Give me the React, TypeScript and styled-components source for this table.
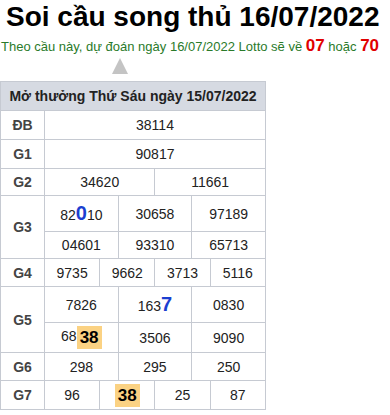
import React from 'react';
import styled, { createGlobalStyle } from 'styled-components';

const GlobalStyle = createGlobalStyle`
  body {
    margin: 0;
    background: #fff;
    font-family: "Liberation Sans", Arial, sans-serif;
  }
`;

const Page = styled.div`
  width: 390px;
  display: flex;
  flex-direction: column;
`;

const Title = styled.h1`
  margin: 0;
  padding: 1px 0 0 6px;
  font-size: 28px;
  line-height: 32px;
  font-weight: 700;
  color: #000;
  white-space: nowrap;
`;

const Lead = styled.p`
  margin: 0;
  padding: 4px 0 0 1px;
  font-size: 13px;
  line-height: 18px;
  color: #2a7a2a;
  white-space: nowrap;
`;

const Lotto = styled.b`
  color: #e10000;
  font-size: 17px;
`;

const Arrow = styled.div`
  margin: 2px 0 7px 112px;
  width: 0;
  height: 0;
  border-left: 8px solid transparent;
  border-right: 8px solid transparent;
  border-bottom: 16px solid #c4c4c4;
`;

const Table = styled.table`
  width: 266px;
  border-collapse: collapse;
  table-layout: fixed;
  font-size: 14px;
  color: #222;
`;

const HeadCell = styled.th`
  background: #d6dae2;
  border: 1px solid #c6cad2;
  height: 28px;
  padding: 0;
  font-size: 14px;
  font-weight: 700;
  color: #222;
  text-align: center;
`;

const Label = styled.td`
  border: 1px solid #c6cad2;
  padding: 0;
  font-weight: 700;
  font-size: 14px;
  color: #444;
  text-align: center;
`;

const Cell = styled.td<{ $h?: number }>`
  border: 1px solid #c6cad2;
  height: ${p => p.$h ?? 27}px;
  padding: 0;
  text-align: center;
  vertical-align: middle;
`;

const Big = styled.span`
  color: #1b3fd0;
  font-weight: 700;
  font-size: 20px;
`;

const Mark = styled.span`
  display: inline-block;
  background: #fbd283;
  color: #000;
  font-weight: 700;
  font-size: 17px;
  line-height: 23px;
  padding: 0 3px;
  vertical-align: middle;
`;

const App: React.FC = () => {
  return (
    <Page>
      <GlobalStyle />
      <Title>Soi cầu song thủ 16/07/2022</Title>
      <Lead>
        Theo cầu này, dự đoán ngày 16/07/2022 Lotto sẽ về <Lotto>07</Lotto> hoặc{' '}
        <Lotto>70</Lotto>
      </Lead>
      <Arrow />
      <Table>
        <colgroup>
          <col style={{ width: 44 }} />
          {Array.from({ length: 12 }).map((_, i) => (
            <col key={i} />
          ))}
        </colgroup>
        <thead>
          <tr>
            <HeadCell colSpan={13}>Mở thưởng Thứ Sáu ngày 15/07/2022</HeadCell>
          </tr>
        </thead>
        <tbody>
          <tr>
            <Label>ĐB</Label>
            <Cell colSpan={12} $h={28}>38114</Cell>
          </tr>
          <tr>
            <Label>G1</Label>
            <Cell colSpan={12} $h={28}>90817</Cell>
          </tr>
          <tr>
            <Label>G2</Label>
            <Cell colSpan={6} $h={26}>34620</Cell>
            <Cell colSpan={6} $h={26}>11661</Cell>
          </tr>
          <tr>
            <Label rowSpan={2}>G3</Label>
            <Cell colSpan={4} $h={35}>
              82<Big>0</Big>10
            </Cell>
            <Cell colSpan={4} $h={35}>30658</Cell>
            <Cell colSpan={4} $h={35}>97189</Cell>
          </tr>
          <tr>
            <Cell colSpan={4} $h={26}>04601</Cell>
            <Cell colSpan={4} $h={26}>93310</Cell>
            <Cell colSpan={4} $h={26}>65713</Cell>
          </tr>
          <tr>
            <Label>G4</Label>
            <Cell colSpan={3} $h={27}>9735</Cell>
            <Cell colSpan={3} $h={27}>9662</Cell>
            <Cell colSpan={3} $h={27}>3713</Cell>
            <Cell colSpan={3} $h={27}>5116</Cell>
          </tr>
          <tr>
            <Label rowSpan={2}>G5</Label>
            <Cell colSpan={4} $h={35}>7826</Cell>
            <Cell colSpan={4} $h={35}>
              163<Big>7</Big>
            </Cell>
            <Cell colSpan={4} $h={35}>0830</Cell>
          </tr>
          <tr>
            <Cell colSpan={4} $h={29}>
              68<Mark>38</Mark>
            </Cell>
            <Cell colSpan={4} $h={29}>3506</Cell>
            <Cell colSpan={4} $h={29}>9090</Cell>
          </tr>
          <tr>
            <Label>G6</Label>
            <Cell colSpan={4} $h={27}>298</Cell>
            <Cell colSpan={4} $h={27}>295</Cell>
            <Cell colSpan={4} $h={27}>250</Cell>
          </tr>
          <tr>
            <Label>G7</Label>
            <Cell colSpan={3} $h={28}>96</Cell>
            <Cell colSpan={3} $h={28}>
              <Mark>38</Mark>
            </Cell>
            <Cell colSpan={3} $h={28}>25</Cell>
            <Cell colSpan={3} $h={28}>87</Cell>
          </tr>
        </tbody>
      </Table>
    </Page>
  );
};

export default App;
